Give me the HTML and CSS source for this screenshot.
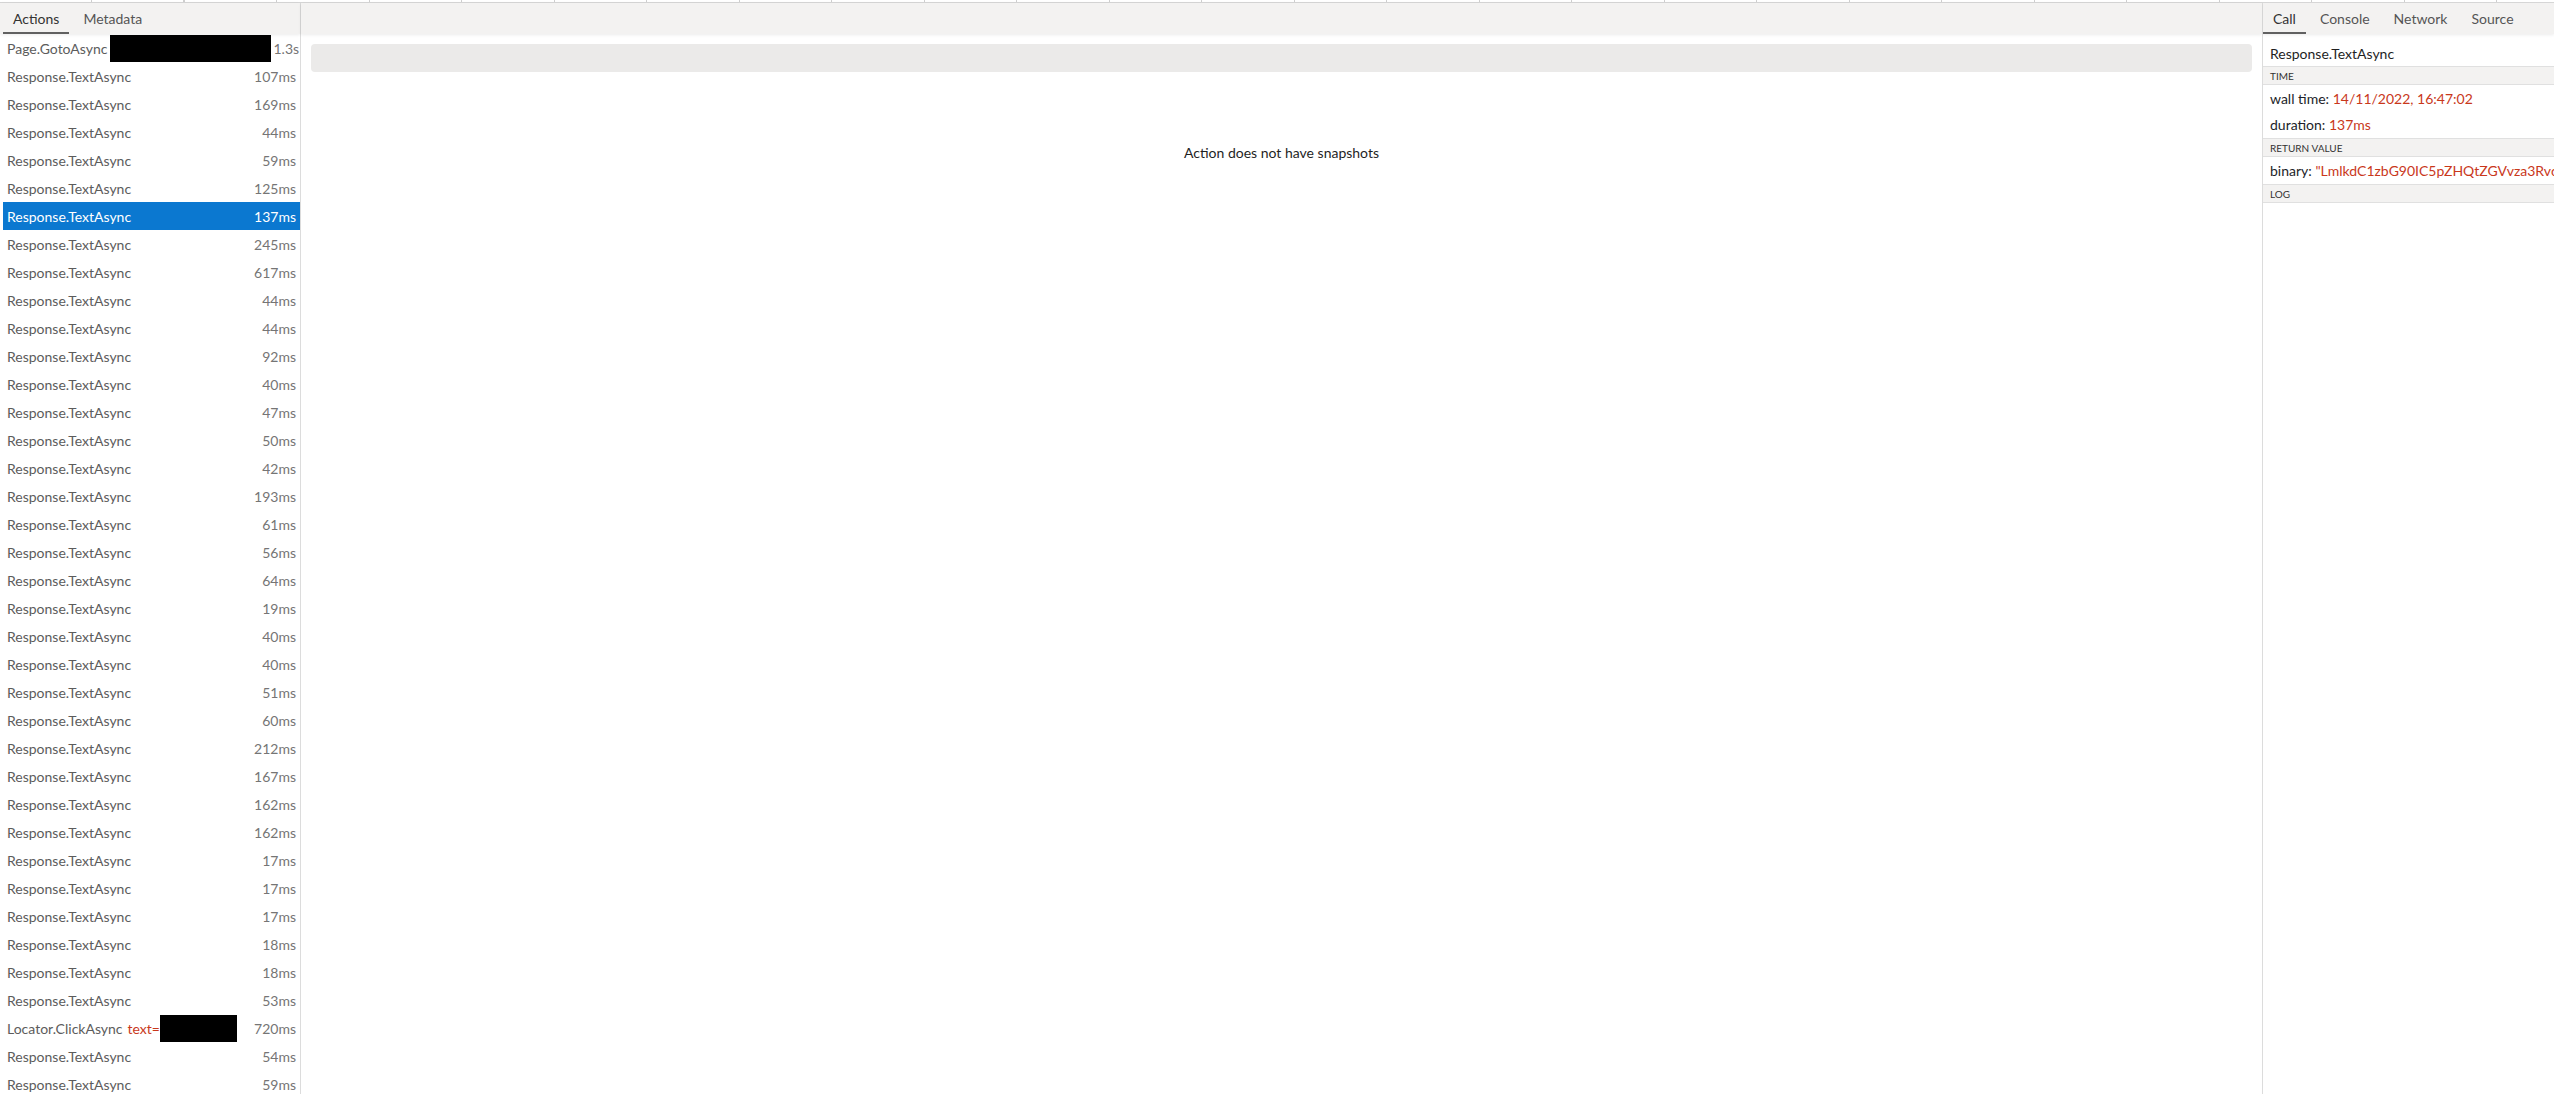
FILE: index.html
```html
<!DOCTYPE html>
<html lang="en">
  <head>
    <meta charset="UTF-8" />
    <title>Trace Viewer</title>
    <link rel="stylesheet" href="styles.css">
  </head>
  <body>
    <div class="timeline"></div>
    <div class="workbench">
      <div class="actions-pane">
        <div class="tab-bar">
          <div class="tab selected">Actions</div>
          <div class="tab">Metadata</div>
        </div>
        <div class="action-list">
          <div class="action"><span class="title">Page.GotoAsync<span class="redacted wide"></span></span><span class="time">1.3s</span></div>
          <div class="action"><span class="title">Response.TextAsync</span><span class="time">107ms</span></div>
          <div class="action"><span class="title">Response.TextAsync</span><span class="time">169ms</span></div>
          <div class="action"><span class="title">Response.TextAsync</span><span class="time">44ms</span></div>
          <div class="action"><span class="title">Response.TextAsync</span><span class="time">59ms</span></div>
          <div class="action"><span class="title">Response.TextAsync</span><span class="time">125ms</span></div>
          <div class="action selected"><span class="title">Response.TextAsync</span><span class="time">137ms</span></div>
          <div class="action"><span class="title">Response.TextAsync</span><span class="time">245ms</span></div>
          <div class="action"><span class="title">Response.TextAsync</span><span class="time">617ms</span></div>
          <div class="action"><span class="title">Response.TextAsync</span><span class="time">44ms</span></div>
          <div class="action"><span class="title">Response.TextAsync</span><span class="time">44ms</span></div>
          <div class="action"><span class="title">Response.TextAsync</span><span class="time">92ms</span></div>
          <div class="action"><span class="title">Response.TextAsync</span><span class="time">40ms</span></div>
          <div class="action"><span class="title">Response.TextAsync</span><span class="time">47ms</span></div>
          <div class="action"><span class="title">Response.TextAsync</span><span class="time">50ms</span></div>
          <div class="action"><span class="title">Response.TextAsync</span><span class="time">42ms</span></div>
          <div class="action"><span class="title">Response.TextAsync</span><span class="time">193ms</span></div>
          <div class="action"><span class="title">Response.TextAsync</span><span class="time">61ms</span></div>
          <div class="action"><span class="title">Response.TextAsync</span><span class="time">56ms</span></div>
          <div class="action"><span class="title">Response.TextAsync</span><span class="time">64ms</span></div>
          <div class="action"><span class="title">Response.TextAsync</span><span class="time">19ms</span></div>
          <div class="action"><span class="title">Response.TextAsync</span><span class="time">40ms</span></div>
          <div class="action"><span class="title">Response.TextAsync</span><span class="time">40ms</span></div>
          <div class="action"><span class="title">Response.TextAsync</span><span class="time">51ms</span></div>
          <div class="action"><span class="title">Response.TextAsync</span><span class="time">60ms</span></div>
          <div class="action"><span class="title">Response.TextAsync</span><span class="time">212ms</span></div>
          <div class="action"><span class="title">Response.TextAsync</span><span class="time">167ms</span></div>
          <div class="action"><span class="title">Response.TextAsync</span><span class="time">162ms</span></div>
          <div class="action"><span class="title">Response.TextAsync</span><span class="time">162ms</span></div>
          <div class="action"><span class="title">Response.TextAsync</span><span class="time">17ms</span></div>
          <div class="action"><span class="title">Response.TextAsync</span><span class="time">17ms</span></div>
          <div class="action"><span class="title">Response.TextAsync</span><span class="time">17ms</span></div>
          <div class="action"><span class="title">Response.TextAsync</span><span class="time">18ms</span></div>
          <div class="action"><span class="title">Response.TextAsync</span><span class="time">18ms</span></div>
          <div class="action"><span class="title">Response.TextAsync</span><span class="time">53ms</span></div>
          <div class="action"><span class="title">Locator.ClickAsync<span class="selector">text=</span><span class="redacted narrow"></span></span><span class="time">720ms</span></div>
          <div class="action"><span class="title">Response.TextAsync</span><span class="time">54ms</span></div>
          <div class="action"><span class="title">Response.TextAsync</span><span class="time">59ms</span></div>
        </div>
      </div>

      <div class="snapshot-pane">
        <div class="tab-bar"></div>
        <div class="snapshot-toolbar"></div>
        <div class="no-snapshot">Action does not have snapshots</div>
      </div>

      <div class="details-pane">
        <div class="tab-bar">
          <div class="tab selected">Call</div>
          <div class="tab">Console</div>
          <div class="tab">Network</div>
          <div class="tab">Source</div>
        </div>
        <div class="call-title">Response.TextAsync</div>
        <div class="call-section">time</div>
        <div class="call-body">
          <div class="call-line">wall time: <span class="value">14/11/2022, 16:47:02</span></div>
          <div class="call-line">duration: <span class="value">137ms</span></div>
        </div>
        <div class="call-section">return value</div>
        <div class="call-body">
          <div class="call-line">binary: <span class="value">"LmlkdC1zbG90IC5pZHQtZGVvza3Rvc.LmlkdC1zbG90IC5pZHQtZGVvza3Rvc"</span></div>
        </div>
        <div class="call-section">log</div>
      </div>
    </div>
  </body>
</html>
```

FILE: styles.css
```css
html,
body {
  margin: 0;
  height: 100%;
  overflow: hidden;
}

body {
  display: flex;
  flex-direction: column;
  background-color: #fff;
  font-family: "Lato", "Liberation Sans", sans-serif;
  font-size: 14px;
  color: #1f1f1f;
}

.timeline {
  height: 2px;
  flex: none;
  border-bottom: 1px solid #d6d6d6;
  background: repeating-linear-gradient(90deg, #fff 0, #fff 91px, #cfcfcf 91px, #cfcfcf 92.5px);
}

.workbench {
  flex: 1;
  display: flex;
  min-height: 0;
}

.tab-bar {
  display: flex;
  height: 31px;
  flex: none;
  background-color: #f3f2f1;
  box-shadow: 0 1px 3px rgba(0, 0, 0, 0.08);
  position: relative;
  z-index: 1;
}

.tab {
  display: flex;
  align-items: center;
  padding: 2px 10px 0;
  margin-right: 4px;
  color: #555;
  border-bottom: 2px solid transparent;
}

.tab.selected {
  color: #333;
  border-bottom-color: #616161;
}

/* actions list */

.actions-pane {
  width: 300px;
  flex: none;
  display: flex;
  flex-direction: column;
  border-right: 1px solid #dcdcdc;
}

.actions-pane .tab-bar {
  padding-left: 3px;
}

.action-list {
  padding-left: 3px;
}

.action {
  display: flex;
  align-items: center;
  justify-content: space-between;
  height: 28px;
  padding: 0 4px;
  color: #5c5c5c;
  white-space: nowrap;
}

.action .title {
  display: flex;
  align-items: center;
}

.action .time {
  color: #757575;
}

.action.selected {
  background-color: #0b78d0;
  color: #fff;
}

.action.selected .time {
  color: #fff;
}

.redacted {
  display: inline-block;
  height: 27px;
  background-color: #000;
}

.redacted.wide {
  width: 161px;
  margin-left: 2px;
  margin-right: 3px;
}

.redacted.narrow {
  width: 77px;
}

.selector {
  color: #c9381b;
  margin-left: 5px;
}

/* snapshot */

.snapshot-pane {
  flex: 1;
  display: flex;
  flex-direction: column;
  min-width: 0;
}

.snapshot-toolbar {
  height: 28px;
  margin: 10px 10px 0;
  border-radius: 4px;
  background-color: #ebeae9;
}

.no-snapshot {
  margin-top: 72px;
  text-align: center;
  color: #1f1f1f;
}

/* call details */

.details-pane {
  width: 291px;
  flex: none;
  border-left: 1px solid #dcdcdc;
  overflow: hidden;
  white-space: nowrap;
}

.call-title {
  height: 25px;
  line-height: 25px;
  padding: 7px 0 0 7px;
  color: #1f1f1f;
}

.call-section {
  height: 17px;
  line-height: 18px;
  padding-left: 7px;
  background-color: #f3f2f1;
  border-top: 1px solid #e0e0e0;
  border-bottom: 1px solid #e0e0e0;
  font-size: 10px;
  text-transform: uppercase;
  color: #333;
}

.call-body {
  padding-top: 1px;
}

.call-line {
  height: 26px;
  line-height: 26px;
  padding-left: 7px;
  color: #1c1e29;
}

.value {
  color: #c9381b;
}
```
